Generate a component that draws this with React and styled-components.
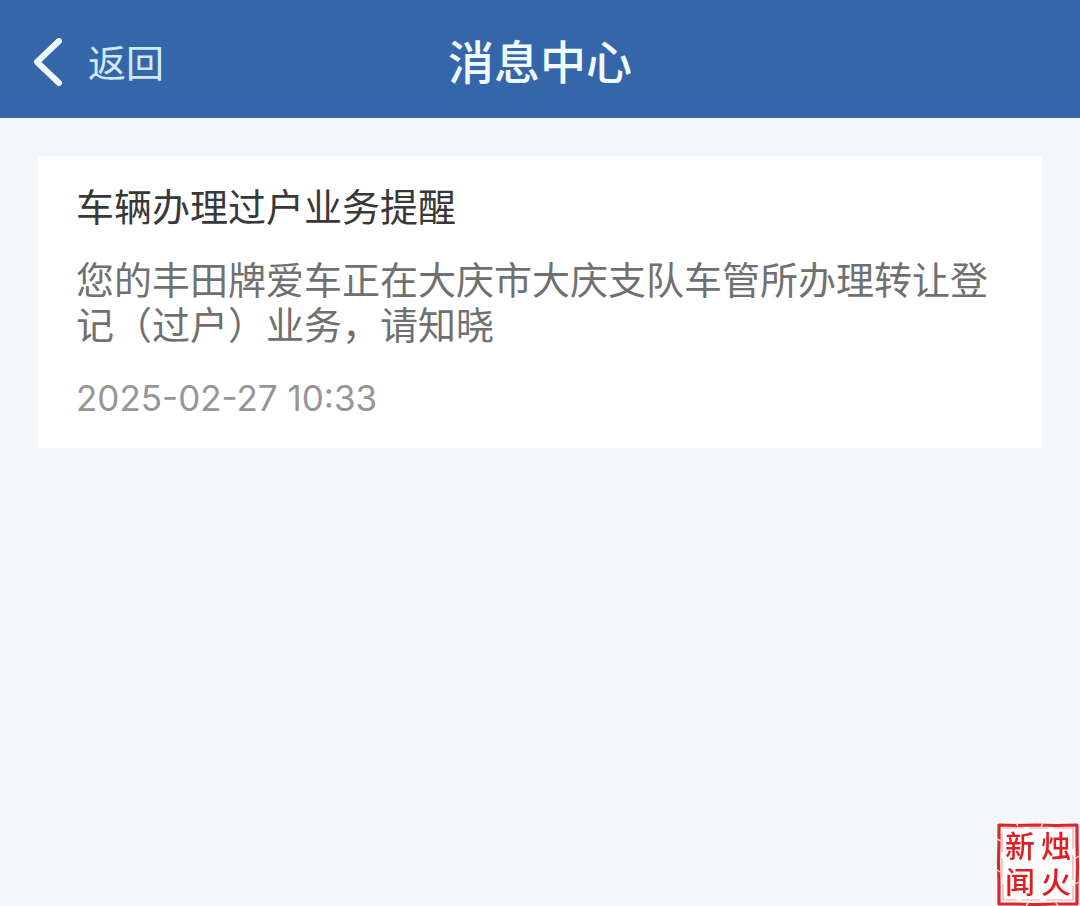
import React from "react";
import styled, { createGlobalStyle } from "styled-components";

const GlobalStyle = createGlobalStyle`
    * {
        box-sizing: border-box;
    }

    body {
        margin: 0;
        background-color: #f3f7f9;
        font-family: "Inter", "Noto Sans CJK SC", sans-serif;
    }
`;

const Page = styled.div`
    min-height: 100vh;
    display: flex;
    flex-direction: column;
`;

const Header = styled.header`
    height: 118px;
    padding: 6px 32px 0;
    display: grid;
    grid-template-columns: 1fr auto 1fr;
    align-items: center;
    background-color: #3566a9;
`;

const BackButton = styled.button`
    display: flex;
    align-items: center;
    justify-self: start;
    gap: 24px;
    padding: 2px 0 0;
    border: none;
    background-color: transparent;
    color: #cfeafa;
    font-family: inherit;
    font-size: 38px;
    line-height: 48px;
    cursor: pointer;
`;

const Title = styled.h1`
    margin: 0;
    color: #f0fcff;
    font-size: 46px;
    font-weight: 500;
    line-height: 56px;
`;

const List = styled.main`
    flex: 1;
    padding: 38px;
`;

const Card = styled.article`
    padding: 29px 38px 27px;
    background-color: #ffffff;
`;

const CardTitle = styled.h2`
    margin: 0 0 28px;
    color: #383838;
    font-size: 38px;
    font-weight: 400;
    line-height: 45px;
`;

const CardText = styled.p`
    margin: 0 0 28px;
    color: #707070;
    font-size: 38px;
    line-height: 45px;
`;

const CardTime = styled.time`
    display: block;
    color: #969696;
    font-size: 35px;
    line-height: 45px;
`;

const Seal = styled.div`
    position: fixed;
    right: 0;
    bottom: 0;
    width: 84px;
    height: 84px;
`;

const SealFrame = styled.svg`
    position: absolute;
    inset: 0;
`;

const SealText = styled.div`
    position: relative;
    height: 100%;
    padding: 6px;
    display: grid;
    grid-template-columns: 1fr 1fr;
    grid-template-rows: 1fr 1fr;
    place-items: center;
    color: #dc1f22;
    font-size: 30px;
    font-weight: 500;
    line-height: 36px;
`;

const messages = [
    {
        id: 1,
        title: "车辆办理过户业务提醒",
        text: "您的丰田牌爱车正在大庆市大庆支队车管所办理转让登记（过户）业务，请知晓",
        time: "2025-02-27 10:33",
    },
];

function BackIcon() {
    return (
        <svg width="32" height="50" viewBox="0 0 32 50" fill="none" aria-hidden="true">
            <path d="M27 3 L5 24 L27 45" stroke="#f0fcff" strokeWidth="6" strokeLinecap="round" strokeLinejoin="round" />
        </svg>
    );
}

function App() {
    return (
        <Page>
            <GlobalStyle />
            <Header>
                <BackButton type="button">
                    <BackIcon />
                    返回
                </BackButton>
                <Title>消息中心</Title>
            </Header>

            <List>
                {messages.map((item) => (
                    <Card key={item.id}>
                        <CardTitle>{item.title}</CardTitle>
                        <CardText>{item.text}</CardText>
                        <CardTime>{item.time}</CardTime>
                    </Card>
                ))}
            </List>

            <Seal>
                <SealFrame width="84" height="84" viewBox="0 0 84 84" fill="none" aria-hidden="true">
                    <rect x="2" y="3" width="80" height="80" fill="#fdfdfd" />
                    <path d="M3 3 L20 3.5 L40 3 L61 3.5 L81 3 L81 22 L81.5 45 L81 64 L81 82 L57 82 L39 82.5 L20 82 L3 82 L3 61 L2.5 40 L3 20 Z" stroke="#dc2629" strokeWidth="3.2" strokeLinejoin="round" />
                    <path d="M1 17 l4 2 M20 1 l2 3 M47 1 l-2 4 M1 48 l3 2 M83 34 l-3 2 M82 60 l-2 2 M30 84 l2 -3 M62 84 l-2 -3" stroke="#f8d5d5" strokeWidth="1.4" />
                    <path d="M7 6 H28 M33 6 H52 M57 6 H77 V27 M77 33 V58 M77 64 V78 H50 M44 78 H26 M21 78 H7 V62 M6 56 V36 M6 30 V12" stroke="#f2a3a4" strokeWidth="1.2" />
                </SealFrame>
                <SealText>
                    <span>新</span>
                    <span>烛</span>
                    <span>闻</span>
                    <span>火</span>
                </SealText>
            </Seal>
        </Page>
    );
}

export default App;
